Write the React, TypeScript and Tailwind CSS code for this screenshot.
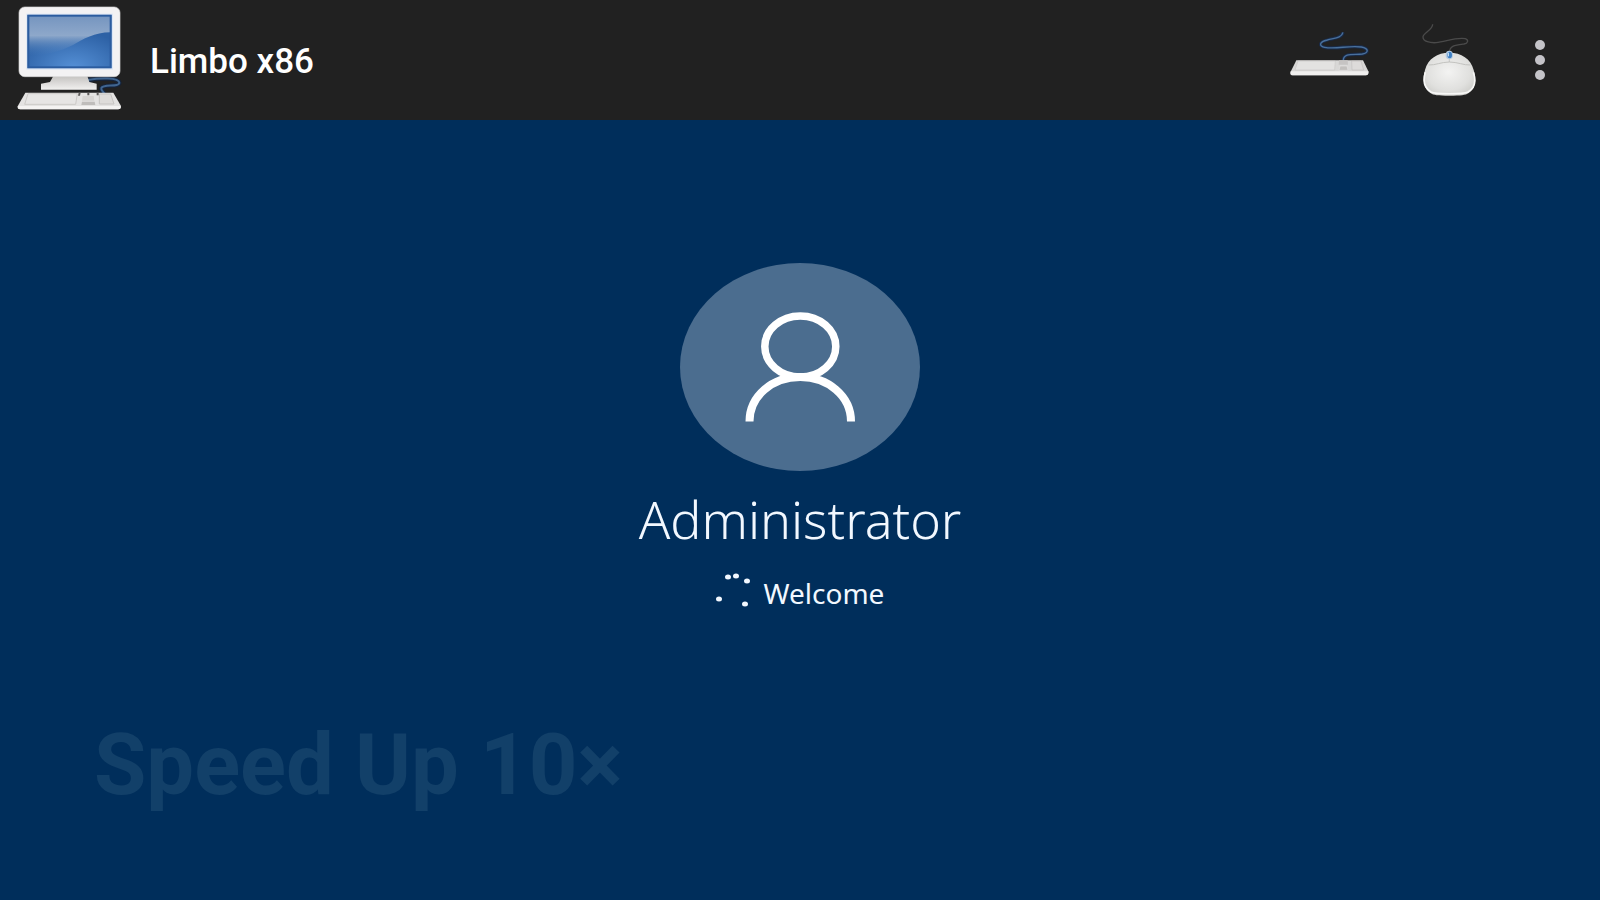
import type { ReactNode } from 'react'

const spinnerDots = [
  { cx: 12, cy: 6 },
  { cx: 20, cy: 5 },
  { cx: 31, cy: 10 },
  { cx: 3, cy: 28 },
  { cx: 29, cy: 33 },
]

function ComputerIcon() {
  return (
    <svg className="h-[110px] w-[110px] shrink-0" viewBox="45 15 330 330" aria-hidden="true">
      <defs>
        <radialGradient id="screenGlow" cx="0.55" cy="1" r="0.7">
          <stop offset="0" stopColor="#5590d6" />
          <stop offset="1" stopColor="#2d61a5" />
        </radialGradient>
        <linearGradient id="glare" x1="0" y1="0" x2="0" y2="1">
          <stop offset="0" stopColor="#7494bf" />
          <stop offset="0.5" stopColor="#8ea8ca" />
          <stop offset="1" stopColor="#4277b8" stopOpacity="0" />
        </linearGradient>
        <linearGradient id="stand" x1="0" y1="0" x2="0" y2="1">
          <stop offset="0" stopColor="#c4c2c0" />
          <stop offset="1" stopColor="#f1f0ef" />
        </linearGradient>
      </defs>
      <path
        d="M262 240C300 234 356 232 358 248C359 262 310 252 304 264C302 271 310 274 314 284"
        fill="none"
        stroke="#15243c"
        strokeWidth="13"
      />
      <path
        d="M262 240C300 234 356 232 358 248C359 262 310 252 304 264C302 271 310 274 314 284"
        fill="none"
        stroke="#40658f"
        strokeWidth="6"
      />
      <path d="M160 228H262L268 246L290 251V269H123V251L150 246Z" fill="url(#stand)" />
      <rect x="57" y="21" width="303" height="209" rx="17" fill="#f3f2f3" stroke="#d5d5d5" strokeWidth="2" />
      <rect x="79" y="41" width="260" height="168" fill="#dce6f5" />
      <rect x="83" y="45" width="251" height="159" fill="url(#screenGlow)" />
      <path d="M83 45H334V97C286 96 250 117 219 135C180 155 135 166 83 168Z" fill="url(#glare)" />
      <rect x="85" y="47" width="247" height="155" fill="none" stroke="#2b5c9f" strokeWidth="6" />
      <path d="M76 278H340L363 318Q364 328 354 328H61Q51 328 53 319Z" fill="#e4e3e2" />
      <path d="M55 318H361Q364 328 354 328H61Q51 328 55 318Z" fill="#f4f3f2" />
      <path d="M84 281H232L227 313H74Z" fill="#e6e5e4" stroke="#cccac8" strokeWidth="3" />
      <path d="M248 288H281L283 302H246Z" fill="#d6d4d2" />
      <path d="M246 305H284L286 315H244Z" fill="#bfbdbb" />
      <path d="M298 282H332L342 312H298Z" fill="#dedcda" stroke="#c6c4c2" strokeWidth="3" />
      <path d="M236 278H242L240 287H234ZM262 278H268V286H262ZM290 278H296V286H290Z" fill="#5b5958" />
    </svg>
  )
}

function KeyboardIcon() {
  return (
    <svg className="h-[60px] w-[84px]" viewBox="24 30 252 180" aria-hidden="true">
      <path
        d="M189 37C185 54 164 54 142 60C117 66 116 78 134 82C168 89 207 75 244 81C267 86 267 98 247 102C222 105 190 98 190 121"
        fill="none"
        stroke="#192b49"
        strokeWidth="10"
      />
      <path
        d="M189 37C185 54 164 54 142 60C117 66 116 78 134 82C168 89 207 75 244 81C267 86 267 98 247 102C222 105 190 98 190 121"
        fill="none"
        stroke="#49709c"
        strokeWidth="4"
      />
      <path d="M49 121H249L265 154Q267 166 257 166H38Q29 166 32 155Z" fill="#d8d7d6" />
      <path d="M32 154H265Q267 166 257 166H38Q29 166 32 154Z" fill="#f0efee" />
      <path d="M54 123H166L164 150H45Z" fill="#e3e2e1" stroke="#cac8c7" strokeWidth="2" />
      <path d="M177 121H203L204 134H176Z" fill="#c6c4c3" />
      <path d="M180 138H201L204 151H177Z" fill="#c2c0be" stroke="#e4e3e2" strokeWidth="2" />
      <path d="M215 123H243L251 150H216Z" fill="#dddbda" stroke="#c2c0bf" strokeWidth="2" />
    </svg>
  )
}

function MouseIcon() {
  return (
    <svg className="h-[76px] w-[58px]" viewBox="60 6 174 228" aria-hidden="true">
      <defs>
        <radialGradient id="mouseBody" cx="0.48" cy="0.45" r="0.6">
          <stop offset="0" stopColor="#f3f3f2" />
          <stop offset="0.7" stopColor="#e0e0de" />
          <stop offset="1" stopColor="#cfcfcc" />
        </radialGradient>
      </defs>
      <path
        d="M98 13C98 31 69 38 69 51C69 65 91 69 108 68C139 64 170 51 196 56C207 60 204 70 192 72C166 75 149 76 148 98"
        fill="none"
        stroke="#4a4a4a"
        strokeWidth="4"
      />
      <path
        d="M148 98C112 98 84 116 75 150C66 181 72 206 91 219C101 226 112 227 148 227C184 227 196 226 206 219C226 206 231 181 221 150C212 116 184 98 148 98Z"
        fill="url(#mouseBody)"
      />
      <path
        d="M76 157C68 184 74 205 93 216C106 223 190 223 204 216C223 205 229 184 220 157"
        fill="none"
        stroke="#f7f7f6"
        strokeWidth="5"
      />
      <path d="M86 135C105 136 124 126 148 126C173 126 191 136 211 135" fill="none" stroke="#c2c2bf" strokeWidth="3" />
      <path d="M148 112V126" stroke="#b8b8b5" strokeWidth="2" />
      <ellipse cx="148" cy="105" rx="11" ry="13" fill="#b5cbe2" />
      <ellipse cx="149" cy="105" rx="7" ry="10" fill="#3e80c4" />
      <path d="M145 98V109" stroke="#dcecfa" strokeWidth="3" />
    </svg>
  )
}

function MoreIcon() {
  return (
    <svg className="h-[40px] w-[10px]" viewBox="0 0 10 40" fill="#c4c3c8" aria-hidden="true">
      <circle cx="5" cy="5" r="5" />
      <circle cx="5" cy="20" r="5" />
      <circle cx="5" cy="35" r="5" />
    </svg>
  )
}

function ToolbarButton({ label, children }: { label: string; children: ReactNode }) {
  return (
    <button type="button" aria-label={label} className="flex items-center justify-center">
      {children}
    </button>
  )
}

function Toolbar() {
  return (
    <header className="flex h-[120px] shrink-0 items-center bg-[#212121] pr-[55px] pl-[15px]">
      <ComputerIcon />
      <h1 className="ml-[25px] pt-[4px] font-['Roboto'] text-[35px] leading-[40px] font-medium text-white">
        Limbo x86
      </h1>
      <div className="ml-auto flex items-center">
        <ToolbarButton label="Keyboard">
          <KeyboardIcon />
        </ToolbarButton>
        <div className="ml-[48px] flex items-center gap-[57px]">
          <ToolbarButton label="Mouse">
            <MouseIcon />
          </ToolbarButton>
          <ToolbarButton label="More options">
            <MoreIcon />
          </ToolbarButton>
        </div>
      </div>
    </header>
  )
}

// The display is wider than the guest's aspect ratio, so the avatar is an ellipse.
function Avatar() {
  return (
    <svg className="h-[208px] w-[240px]" viewBox="0 0 240 208" role="img" aria-label="User">
      <ellipse cx="120" cy="104" rx="120" ry="104" fill="#4b6d8f" />
      <g fill="none" stroke="#ffffff">
        <ellipse cx="120.3" cy="83.5" rx="35.5" ry="30.5" strokeWidth="7.5" />
        <path d="M69.5 158.5C69.5 133 92 114 120.3 114C148 114 171 133 171 158.5" strokeWidth="8" />
      </g>
    </svg>
  )
}

function Spinner() {
  return (
    <svg className="h-[38px] w-[36px]" viewBox="0 0 36 38" fill="#f2f8ff" aria-hidden="true">
      {spinnerDots.map((dot) => (
        <ellipse key={`${dot.cx}-${dot.cy}`} cx={dot.cx} cy={dot.cy} rx="3" ry="2.5" />
      ))}
    </svg>
  )
}

export default function App() {
  return (
    <div className="flex min-h-screen flex-col bg-[#002e5b]">
      <Toolbar />
      <main className="relative flex grow flex-col items-center overflow-hidden pt-[143px] font-['Noto_Sans','Open_Sans',sans-serif] text-[#f2f8ff]">
        <Avatar />
        <h2 className="mt-[16px] text-[52px] leading-[64px] font-light">Administrator</h2>
        <div className="mt-[18px] flex items-center gap-[12px]">
          <Spinner />
          <p className="pt-[6px] text-[28px] leading-[36px]">Welcome</p>
        </div>
        <p className="absolute bottom-[77px] left-[94px] font-['Roboto'] text-[85px] leading-[116px] font-bold text-[#124069]">
          Speed Up 10×
        </p>
      </main>
    </div>
  )
}
